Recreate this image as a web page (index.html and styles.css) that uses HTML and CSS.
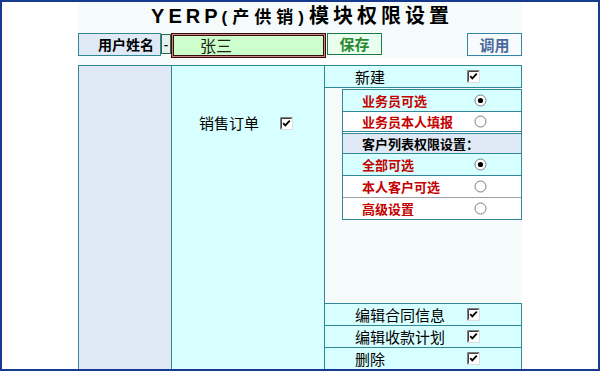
FILE: index.html
```html
<!DOCTYPE html>
<html lang="zh-CN">
<head>
<meta charset="UTF-8">
<title>YERP(产供销)模块权限设置</title>
<link rel="stylesheet" href="styles.css">
</head>
<body>
<div class="frame">
  <div class="page">
    <!-- title + user -->
    <div class="head">
      <h1 class="title">YERP<span class="sub">(产供销)</span>模块权限设置</h1>
      <div class="user-row">
        <div class="user-label">用户姓名</div>
        <div class="dash">-</div>
        <div class="user-input">张三</div>
        <button class="btn btn-save">保存</button>
        <button class="btn btn-load">调用</button>
      </div>
    </div>
    <div class="gap"><div class="gap-fill"></div></div>

    <!-- permissions -->
    <div class="perm">
      <div class="col-side"></div>
      <div class="col-module">
        <span class="module-name">销售订单</span>
        <svg class="chk" width="13" height="13" viewBox="0 0 13 13"><rect x="0" y="0" width="13" height="13" fill="#fff"/><path d="M0.5 12.5V0.5H12.5" fill="none" stroke="#808080"/><path d="M1.5 11.5V1.5H11.5" fill="none" stroke="#404040"/><path d="M0.5 12.5H12.5V0.5" fill="none" stroke="#dcdcdc"/><path d="M3.2 6.2L5.3 8.4L9.8 3.6" fill="none" stroke="#000" stroke-width="1.8"/></svg>
      </div>
      <div class="col-items">
        <div class="item item-top">
          <span class="lbl">新建</span>
          <svg class="chk" width="13" height="13" viewBox="0 0 13 13"><rect x="0" y="0" width="13" height="13" fill="#fff"/><path d="M0.5 12.5V0.5H12.5" fill="none" stroke="#808080"/><path d="M1.5 11.5V1.5H11.5" fill="none" stroke="#404040"/><path d="M0.5 12.5H12.5V0.5" fill="none" stroke="#dcdcdc"/><path d="M3.2 6.2L5.3 8.4L9.8 3.6" fill="none" stroke="#000" stroke-width="1.8"/></svg>
        </div>

        <div class="sub-table">
          <div class="opt opt-cyan">
            <span class="lbl">业务员可选</span>
            <svg class="radio" width="13" height="13" viewBox="0 0 13 13"><circle cx="6.5" cy="6.5" r="5.5" fill="#fff" stroke="#7c7c7c"/><circle cx="6.5" cy="6.5" r="2.6" fill="#000"/></svg>
          </div>
          <div class="opt opt-white">
            <span class="lbl">业务员本人填报</span>
            <svg class="radio" width="13" height="13" viewBox="0 0 13 13"><circle cx="6.5" cy="6.5" r="5.5" fill="#fff" stroke="#7c7c7c"/></svg>
          </div>
          <div class="opt opt-head">客户列表权限设置：</div>
          <div class="opt opt-cyan">
            <span class="lbl">全部可选</span>
            <svg class="radio" width="13" height="13" viewBox="0 0 13 13"><circle cx="6.5" cy="6.5" r="5.5" fill="#fff" stroke="#7c7c7c"/><circle cx="6.5" cy="6.5" r="2.6" fill="#000"/></svg>
          </div>
          <div class="opt opt-white opt-gray">
            <span class="lbl">本人客户可选</span>
            <svg class="radio" width="13" height="13" viewBox="0 0 13 13"><circle cx="6.5" cy="6.5" r="5.5" fill="#fff" stroke="#7c7c7c"/></svg>
          </div>
          <div class="opt opt-white">
            <span class="lbl">高级设置</span>
            <svg class="radio" width="13" height="13" viewBox="0 0 13 13"><circle cx="6.5" cy="6.5" r="5.5" fill="#fff" stroke="#7c7c7c"/></svg>
          </div>
        </div>

        <div class="items-bottom">
          <div class="item">
            <span class="lbl">编辑合同信息</span>
            <svg class="chk" width="13" height="13" viewBox="0 0 13 13"><rect x="0" y="0" width="13" height="13" fill="#fff"/><path d="M0.5 12.5V0.5H12.5" fill="none" stroke="#808080"/><path d="M1.5 11.5V1.5H11.5" fill="none" stroke="#404040"/><path d="M0.5 12.5H12.5V0.5" fill="none" stroke="#dcdcdc"/><path d="M3.2 6.2L5.3 8.4L9.8 3.6" fill="none" stroke="#000" stroke-width="1.8"/></svg>
          </div>
          <div class="item">
            <span class="lbl">编辑收款计划</span>
            <svg class="chk" width="13" height="13" viewBox="0 0 13 13"><rect x="0" y="0" width="13" height="13" fill="#fff"/><path d="M0.5 12.5V0.5H12.5" fill="none" stroke="#808080"/><path d="M1.5 11.5V1.5H11.5" fill="none" stroke="#404040"/><path d="M0.5 12.5H12.5V0.5" fill="none" stroke="#dcdcdc"/><path d="M3.2 6.2L5.3 8.4L9.8 3.6" fill="none" stroke="#000" stroke-width="1.8"/></svg>
          </div>
          <div class="item">
            <span class="lbl">删除</span>
            <svg class="chk" width="13" height="13" viewBox="0 0 13 13"><rect x="0" y="0" width="13" height="13" fill="#fff"/><path d="M0.5 12.5V0.5H12.5" fill="none" stroke="#808080"/><path d="M1.5 11.5V1.5H11.5" fill="none" stroke="#404040"/><path d="M0.5 12.5H12.5V0.5" fill="none" stroke="#dcdcdc"/><path d="M3.2 6.2L5.3 8.4L9.8 3.6" fill="none" stroke="#000" stroke-width="1.8"/></svg>
          </div>
        </div>
      </div>
    </div>
  </div>
</div>
</body>
</html>
```

FILE: styles.css
```css
* {
	box-sizing: border-box;
}

body {
	margin: 0;
	background: #ffffff;
	font-family: "Noto Sans CJK SC", "Noto Sans", sans-serif;
	color: #000000;
}

.frame {
	width: 600px;
	height: 371px;
	border: 2px solid #163a8e;
	overflow: hidden;
}

.page {
	width: 444px;
	margin-left: 76px;
}

/* header */
.head {
	height: 56px;
	background: #f5fbfb;
}

.title {
	margin: 0;
	height: 31px;
	padding-bottom: 2px;
	padding-left: 4px;
	line-height: 29px;
	text-align: center;
	font-family: "Liberation Sans", "Noto Sans CJK SC", sans-serif;
	font-size: 20px;
	font-weight: bold;
	letter-spacing: 4px;
}

.title .sub {
	font-size: 17px;
	letter-spacing: 5px;
}

.user-row {
	display: flex;
	align-items: flex-start;
	height: 25px;
}

.user-label {
	width: 83px;
	height: 23px;
	padding-right: 6px;
	border: 1px solid #2f8797;
	background: #dfe8f5;
	font-size: 14px;
	font-weight: bold;
	line-height: 21px;
	text-align: right;
}

.dash {
	width: 10px;
	height: 20px;
	margin-top: 1px;
	border: 1px solid #2a6b4a;
	background: #e6f2ef;
	font-size: 12px;
	font-weight: bold;
	line-height: 17px;
	text-align: center;
}

.user-input {
	width: 155px;
	height: 25px;
	padding-left: 28px;
	border: 1px solid #3a0c0c;
	box-shadow: inset 0 0 0 1px #c78787, inset 0 0 0 2px #3a0c0c;
	background: #ccffcc;
	color: #1b2410;
	font-size: 16px;
	line-height: 22px;
}

.btn {
	width: 55px;
	padding: 0;
	font-family: inherit;
	font-size: 15px;
	font-weight: bold;
	line-height: 18px;
	cursor: pointer;
}

.btn-save {
	height: 22px;
	margin-left: 1px;
	border: 1px solid #1b7a48;
	background: #e8ffee;
	color: #2c8a34;
}

.btn-load {
	height: 23px;
	margin-left: auto;
	border: 1px solid #3288a6;
	background: #f7fbfd;
	color: #4a6a9c;
}

.gap {
	height: 7px;
}

.gap-fill {
	width: 122px;
	height: 7px;
	background: #f5fbfb;
}

/* permission table */
.perm {
	display: grid;
	grid-template-columns: 93px 153px 197px;
	height: 304px;
	border-top: 1px solid #2f8797;
	border-left: 1px solid #2f8797;
}

.col-side {
	background: #dfe8f5;
	border-right: 1px solid #2f8797;
}

.col-module {
	display: flex;
	justify-content: center;
	align-items: center;
	align-content: flex-start;
	flex-wrap: wrap;
	gap: 21px;
	padding-top: 47px;
	padding-right: 4px;
	background: #d8ffff;
	border-right: 1px solid #2f8797;
	font-size: 15px;
	line-height: 20px;
}

.col-module .chk {
	margin-top: 1px;
}

.col-items {
	display: flex;
	flex-direction: column;
	background: #f5fbfb;
}

.item {
	display: flex;
	align-items: center;
	height: 22px;
	padding-left: 30px;
	background: #d8ffff;
	border-right: 1px solid #2f8797;
	font-size: 15px;
}

.item-top {
	border-bottom: 1px solid #2f8797;
}

.item .lbl {
	width: 112px;
}

.sub-table {
	margin: 1px 0 0 17px;
	border: 1px solid #2f8797;
	border-bottom: 0;
	background: #ffffff;
}

.opt {
	display: flex;
	align-items: center;
	height: 22px;
	padding-left: 19px;
	border-bottom: 1px solid #2f8797;
	color: #c40000;
	font-size: 13px;
	font-weight: bold;
}

.opt .lbl {
	width: 112px;
}

.opt-cyan {
	background: #d8ffff;
}

.opt-white {
	background: #ffffff;
}

.opt-white:nth-child(2) {
	height: 20px;
}

.opt-head {
	height: 21px;
	margin-top: 1px;
	border-top: 1px solid #2f8797;
	background: #dfe8f5;
	color: #000000;
}

.opt-gray {
	border-bottom-color: #a0a0a0;
}

.items-bottom {
	margin-top: auto;
}

.items-bottom .item {
	border-top: 1px solid #2f8797;
}

.chk,
.radio {
	display: block;
	flex-shrink: 0;
}
```
